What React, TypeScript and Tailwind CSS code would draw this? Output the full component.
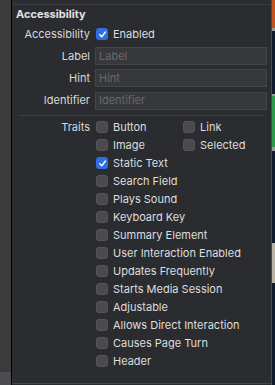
import React from "react";

const font = { fontFamily: "Inter, 'Noto Sans', sans-serif" };

function Box({ checked }: { checked?: boolean }) {
  if (checked) {
    return (
      <div className="w-[12px] h-[12px] rounded-[3px] bg-[#2f6fe0] flex items-center justify-center shrink-0">
        <svg width="9" height="9" viewBox="0 0 10 10">
          <path d="M2 5.3 L4.2 7.6 L8.2 2.2" stroke="white" strokeWidth="1.6" fill="none" strokeLinecap="round" strokeLinejoin="round" />
        </svg>
      </div>
    );
  }
  return <div className="w-[12px] h-[12px] rounded-[3px] bg-[#4b4b4f] border border-[#56565a] shrink-0" />;
}

function Check({ label, checked }: { label: string; checked?: boolean }) {
  return (
    <div className="flex items-center gap-[5px] h-[18px]">
      <Box checked={checked} />
      <span className="text-[11px] text-[#dedede] whitespace-nowrap">{label}</span>
    </div>
  );
}

function Field({ label, placeholder, h }: { label: string; placeholder: string; h: string }) {
  return (
    <div className={"flex items-center " + h}>
      <div className="w-[78px] text-right text-[11px] text-[#d8d8d8]">{label}</div>
      <div className="ml-[5px] w-[172px] h-[18px] bg-[#37383b] border border-[#444548] flex items-center px-[3px]">
        <span className="text-[11px] text-[#67686b]">{placeholder}</span>
      </div>
    </div>
  );
}

export default function App() {
  const traits: [string, boolean][] = [
    ["Static Text", true],
    ["Search Field", false],
    ["Plays Sound", false],
    ["Keyboard Key", false],
    ["Summary Element", false],
    ["User Interaction Enabled", false],
    ["Updates Frequently", false],
    ["Starts Media Session", false],
    ["Adjustable", false],
    ["Allows Direct Interaction", false],
    ["Causes Page Turn", false],
    ["Header", false],
  ];
  return (
    <div className="w-[275px] h-[385px] flex overflow-hidden bg-[#2b2c2f]" style={font}>
      <div className="w-[11px] h-full flex flex-col">
        <div className="flex-1 bg-[#3b3b3b]" />
        <div className="h-[13px] bg-[#4a4c50]" />
      </div>
      <div className="w-px h-full bg-black" />
      <div className="w-[259px] h-full bg-[#2b2c2f] flex flex-col">
        <div className="h-[4px]" />
        <div className="h-px bg-[#3a3b3e]" />
        <div className="pl-[4px] h-[18px] leading-[18px] text-[11px] font-bold text-[#e2e2e2]">Accessibility</div>
        <div className="flex items-center h-[22px]">
          <div className="w-[78px] text-right text-[11px] text-[#d8d8d8]">Accessibility</div>
          <div className="ml-[6px]">
            <Check label="Enabled" checked />
          </div>
        </div>
        <Field label="Label" placeholder="Label" h="h-[22px]" />
        <Field label="Hint" placeholder="Hint" h="h-[22px]" />
        <Field label="Identifier" placeholder="Identifier" h="h-[23px]" />
        <div className="h-[3px]" />
        <div className="mx-[7px] h-px bg-[#404144]" />
        <div className="h-[2px]" />
        <div className="flex">
          <div className="w-[78px] text-right text-[11px] text-[#d8d8d8] h-[18px] leading-[18px]">Traits</div>
          <div className="ml-[6px] flex flex-col">
            <div className="flex">
              <div className="w-[87px]">
                <Check label="Button" />
              </div>
              <Check label="Link" />
            </div>
            <div className="flex">
              <div className="w-[87px]">
                <Check label="Image" />
              </div>
              <Check label="Selected" />
            </div>
            {traits.map(([l, c]) => (
              <Check key={l} label={l} checked={c} />
            ))}
          </div>
        </div>
        <div className="flex-1" />
        <div className="h-px bg-[#45464a] mb-[1px]" />
      </div>
      <div className="w-px h-full bg-[#4a4b4e]" />
      <div className="w-[3px] h-full flex flex-col">
        <div className="h-[28px] bg-[#c4521c]" />
        <div className="h-[3px] bg-[#9a9a9a]" />
        <div className="h-[63px] bg-[#0f1a2e]" />
        <div className="h-[2px] bg-[#9a9a9a]" />
        <div className="h-[51px] bg-[#2c9a4c]" />
        <div className="h-[4px] bg-[#9a9a9a]" />
        <div className="h-[92px] bg-[#0f1a2e]" />
        <div className="h-[40px] bg-[#b8b2a4]" />
        <div className="flex-1 bg-[#0f1a2e]" />
      </div>
    </div>
  );
}
